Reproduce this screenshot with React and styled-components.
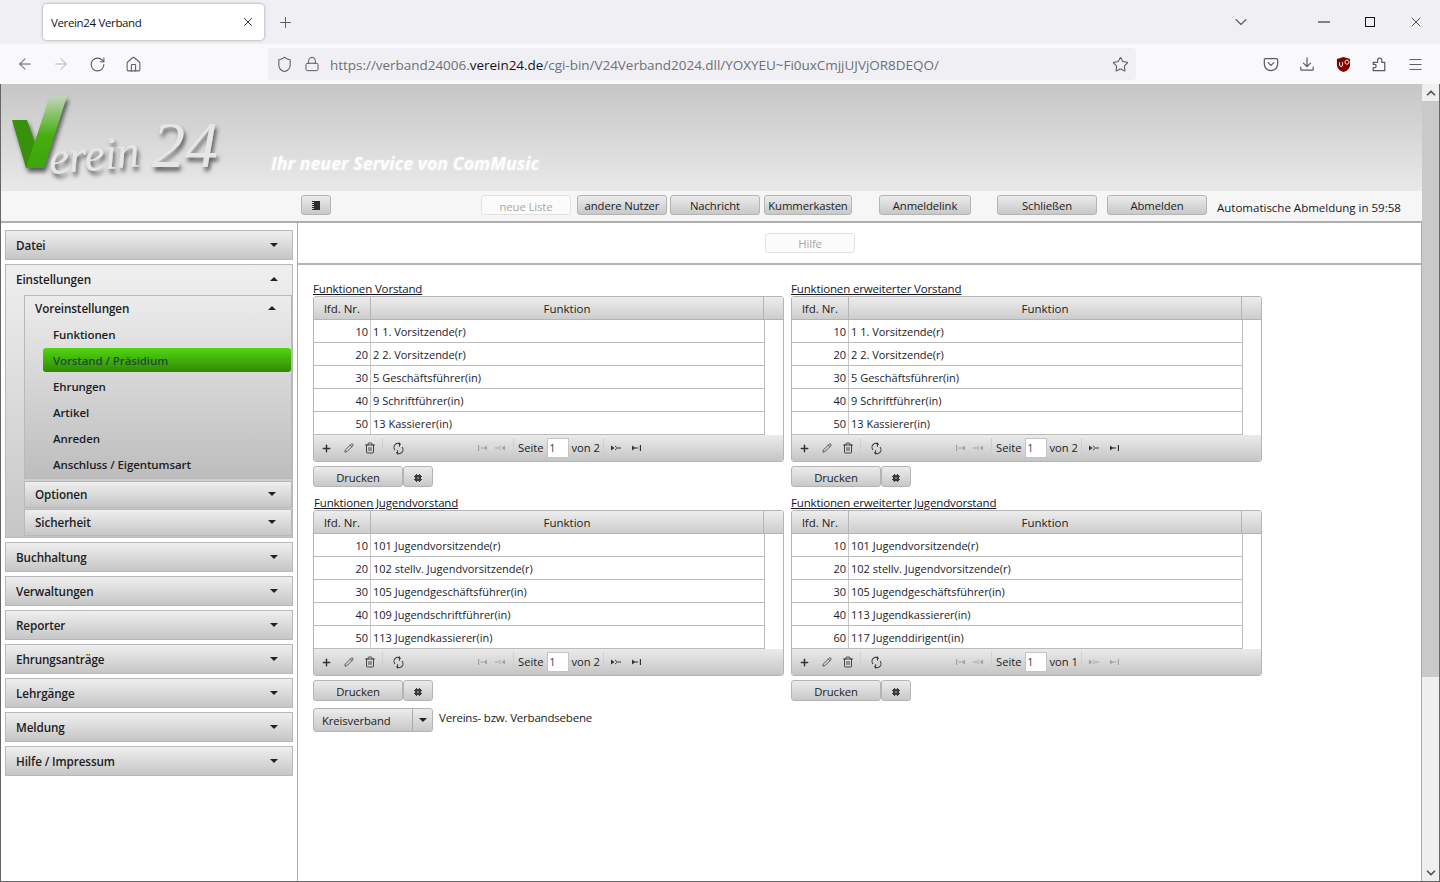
import React from "react";
import styled, { createGlobalStyle } from "styled-components";
import { ArrowLeft, ArrowRight, RotateCw, House, Shield, Lock, Star, Menu, Plus, X, ChevronDown, ChevronUp, Pencil, Trash2 } from "lucide-react";

const Global = createGlobalStyle`
  html, body { margin: 0; padding: 0; height: 100%; background: #fff; overflow: hidden; }
  #root { height: 100%; }
  * { box-sizing: border-box; }
  body { font-family: "Open Sans", "Noto Sans", sans-serif; font-size: 12px; color: #222; }
`;

const Window = styled.div`width: 1440px; height: 882px; display: flex; flex-direction: column; overflow: hidden;`;

const TabBar = styled.div`height: 44px; background: #f0f0f4; display: flex; align-items: flex-start; padding-right: 1px;`;
const Tab = styled.div`
  margin: 4px 0 0 43px; width: 221px; height: 36px; background: #fff; border-radius: 4px;
  box-shadow: 0 0 3px rgba(0,0,0,.4); display: flex; align-items: center; justify-content: space-between;
  padding: 0 9px 0 8px; font-size: 11.5px; letter-spacing: -.35px; color: #15141a;
`;
const NewTab = styled.div`width: 42px; height: 44px; display: flex; align-items: center; justify-content: center; color: #5b5b66;`;
const TabList = styled.div`margin-left: auto; margin-right: 50px; width: 20px; height: 44px; display: flex; align-items: center; justify-content: center; color: #5b5b66;`;
const WinBtn = styled.div`width: 46px; height: 44px; display: flex; align-items: center; justify-content: center; color: #15141a;`;

const NavBar = styled.div`height: 40px; background: #f9f9fb; display: flex; align-items: center; padding-left: 7px;`;
const NavSlot = styled.div`width: 36px; height: 32px; display: flex; align-items: center; justify-content: center; color: ${p => p.$off ? "#b5b5bc" : "#5b5b66"};`;
const UrlBar = styled.div`
  margin: 0 117px; width: 868px; height: 32px; border-radius: 4px; background: #f0f0f4;
  display: flex; align-items: center; color: #5b5b66;
`;
const UrlIcon = styled.div`width: ${p => p.$w}px; display: flex; justify-content: center; flex: none;`;
const UrlText = styled.div`font-size: 13.5px; padding-top: 1px; color: #6f6f78; white-space: nowrap; flex: 1; letter-spacing: -.03px; b { font-weight: 400; color: #15141a; }`;

const Page = styled.div`flex: 1; display: flex; min-height: 0; border-left: 1px solid #666; border-bottom: 1px solid #666;`;
const Main = styled.div`flex: 1; min-width: 0; display: flex; flex-direction: column;`;

const Banner = styled.div`height: 107px; flex: none; display: flex; background: linear-gradient(#c6c6c6, #e9e9e9); padding-left: 9px;`;
const LogoArt = styled.svg`width: 216px; height: 100px; margin-top: 6px; flex: none; overflow: visible;`;
const Tagline = styled.div`
  align-self: flex-end; margin: 0 0 16px 45px; font-size: 17.85px; line-height: 24px; font-weight: 700; font-style: italic;
  color: #fdfdfd; text-shadow: 0 0 3px rgba(255,255,255,.5);
`;

const Toolbar = styled.div`height: 32px; flex: none; background: #f6f6f6; border-bottom: 2px solid #aeaeae; display: flex; align-items: flex-start; padding: 4px 0 0 300px;`;
const Btn = styled.button`
  flex: none; width: ${p => p.$w}px; height: ${p => p.$h || 20}px; margin-left: ${p => p.$ml || 0}px;
  padding: ${p => p.$pt ?? 2}px 0 0;
  display: flex; align-items: center; justify-content: center;
  font: 11.3px/1 "Open Sans", sans-serif; letter-spacing: -.1px; color: ${p => p.$off ? "#a8a8a8" : "#222"};
  border: 1px solid ${p => p.$off ? "#e2e2e2" : "#b4b4b4"}; border-radius: 3px;
  background: ${p => p.$off ? "#fbfbfb" : "linear-gradient(#ececec, #c8c8c8)"};
`;
const Countdown = styled.div`margin: 5px 0 0 10px; font-size: 11.5px; line-height: 16px; color: #15151f; white-space: nowrap;`;

const Body = styled.div`flex: 1; min-height: 0; display: flex;`;
const Sidebar = styled.div`width: 297px; flex: none; border-right: 1px solid #ababab; padding: 7px 0 0 4px; display: flex; flex-direction: column; gap: 4px;`;
const panelGrad = "linear-gradient(#efefef, #c6c6c6)";
const Head = styled.div`
  height: ${p => p.$h}px; margin-bottom: ${p => p.$mb || 0}px; display: flex; align-items: center; justify-content: space-between;
  padding: 0 ${p => p.$pr || 14}px 0 ${p => p.$pl}px;
  font-size: 11.7px; letter-spacing: -.1px; font-weight: 600; color: #1c1c24; flex: none;
`;
const Panel = styled.div`width: 288px; height: 30px; flex: none; border: 1px solid #b9b9b9; background: ${panelGrad};`;
const OpenPanel = styled.div`width: 288px; height: 274px; flex: none; border: 1px solid #b9b9b9; background: ${panelGrad}; overflow: hidden;`;
const SubGroup = styled.div`margin-left: 18px; display: flex; flex-direction: column; gap: 1px; width: 268px;`;
const SubOpen = styled.div`height: 184px; margin-bottom: 1px; border: 1px solid #b9b9b9; background: linear-gradient(#ececec, #bdbdbd); flex: none;`;
const SubPanel = styled.div`height: 27px; border: 1px solid #b9b9b9; background: ${panelGrad}; flex: none;`;
const Leaves = styled.div`display: flex; flex-direction: column; gap: 2px; padding: 1px 0 0 18px;`;
const Leaf = styled.div`
  height: 24px; padding-left: 10px; display: flex; align-items: center; font-size: 11.5px; letter-spacing: -.1px; font-weight: 600;
  border-radius: 3px; color: ${p => p.$on ? "#1f4b3a" : "#1c1c24"};
  background: ${p => p.$on ? "linear-gradient(#52d610, #2f8a05)" : "none"};
`;
const Caret = styled.span`
  width: 0; height: 0; border-left: 4px solid transparent; border-right: 4px solid transparent;
  ${p => p.$up ? "border-bottom: 4px solid #222;" : "border-top: 4px solid #222;"}
`;

const Content = styled.div`flex: 1; min-width: 0; border-right: 1px solid #ababab; display: flex; flex-direction: column;`;
const HelpBar = styled.div`height: 42px; flex: none; border-bottom: 2px solid #b4b4b4; padding: 10px 0 0 467px;`;
const Tables = styled.div`display: grid; grid-template-columns: 471px 471px; column-gap: 7px; row-gap: 10px; padding: 18px 0 0 15px;`;
const Cell = styled.div`display: flex; flex-direction: column;`;
const Caption = styled.div`height: 13px; font-size: 11.5px; line-height: 12px; letter-spacing: -.15px; text-decoration: underline; color: #15151f; white-space: nowrap; padding-left: ${p => p.$in || 0}px;`;
const Grid = styled.div`height: 166px; border: 1px solid #b5b5b5; border-radius: 3px; overflow: hidden; display: flex; flex-direction: column; background: #fff;`;
const GridHead = styled.div`
  height: 23px; flex: none; display: grid; grid-template-columns: 57px 393px 1fr;
  background: linear-gradient(#ededed, #cdcdcd); border-bottom: 1px solid #b5b5b5;
`;
const HeadCell = styled.div`display: flex; align-items: center; justify-content: center; border-right: 1px solid #b5b5b5; font-size: 11.5px; color: #222; &:last-child { border-right: none; }`;
const GridRow = styled.div`
  height: 23px; flex: none; width: 451px; display: grid; grid-template-columns: 57px 394px;
  border-bottom: 1px solid #bbb;
`;
const NumCell = styled.div`display: flex; align-items: center; justify-content: flex-end; padding-right: 2px; border-right: 1px solid #c9c9c9; font-size: 11px; color: #1a1a2a;`;
const TextCell = styled.div`display: flex; align-items: center; padding-left: 2px; border-right: 1px solid #bbb; font-size: 11px; color: #1a1a2a; white-space: nowrap;`;
const Pager = styled.div`height: 26px; flex: none; display: flex; align-items: center; background: linear-gradient(#ebebeb, #c5c5c5); padding-left: 1px;`;
const PagerBtn = styled.div`width: ${p => p.$w}px; margin-left: ${p => p.$ml || 0}px; height: 20px; flex: none; display: flex; align-items: center; justify-content: center; color: ${p => p.$off ? "#a2a2a2" : "#333"};`;
const Sep = styled.div`width: 1px; height: 20px; background: #cfcfcf; flex: none; margin-left: ${p => p.$ml || 0}px;`;
const PagerLabel = styled.div`font-size: 11.2px; line-height: 14px; color: #222; margin-left: ${p => p.$ml}px; flex: none; white-space: nowrap;`;
const PageInput = styled.div`width: 22px; height: 20px; margin-left: 3px; flex: none; border: 1px solid #c4c4c4; background: #fff; font-size: 10px; line-height: 18px; padding-left: 2px; color: #333;`;
const Actions = styled.div`display: flex; margin-top: 4px;`;

const FooterRow = styled.div`display: flex; align-items: flex-start; padding: 7px 0 0 15px;`;
const Select = styled.div`
  width: 120px; height: 24px; display: grid; grid-template-columns: 1fr 19px; border: 1px solid #b4b4b4; border-radius: 3px;
  background: linear-gradient(#ececec, #c8c8c8); font-size: 11.3px; letter-spacing: -.1px; color: #222;
`;
const SelectVal = styled.div`display: flex; align-items: center; padding-left: 8px; border-right: 1px solid #aaa; padding-top: 1px;`;
const SelectArrow = styled.div`display: flex; align-items: center; justify-content: center;`;
const FieldNote = styled.div`margin-left: 6px; font-size: 11.5px; letter-spacing: -.2px; line-height: 20px; color: #222;`;

const Scroll = styled.div`width: 18px; flex: none; border-right: 1px solid #666; display: flex; flex-direction: column; background: #efefef;`;
const ScrollBtn = styled.div`height: 17px; flex: none; background: #efefef; display: flex; align-items: center; justify-content: center; color: #555;`;
const Thumb = styled.div`height: 576px; flex: none; background: #c9c9c9;`;
const Track = styled.div`flex: 1;`;

const FirstIcon = () => <svg width="10" height="8" viewBox="0 0 10 8" fill="currentColor"><rect x="0" y="1" width="1.2" height="6"/><path d="M9 1.500v5L5.500 4z"/><rect x="2.500" y="3.500" width="3" height="1"/></svg>;
const PrevIcon = () => <svg width="12" height="8" viewBox="0 0 12 8" fill="currentColor"><path d="M11 1.500v5L7.500 4zM4 4l3-2.500v1L5 4l2 1.500v1z"/><rect x="1" y="3.500" width="3" height="1"/></svg>;
const NextIcon = () => <svg width="12" height="8" viewBox="0 0 12 8" fill="currentColor"><path d="M1 1.500v5L4.500 4zM8 4L5 1.500v1L7 4 5 5.500v1z"/><rect x="8" y="3.500" width="3" height="1"/></svg>;
const LastIcon = () => <svg width="10" height="8" viewBox="0 0 10 8" fill="currentColor"><rect x="8.800" y="1" width="1.200" height="6"/><path d="M1 1.500v5L4.500 4z"/><rect x="4" y="3.500" width="3" height="1"/></svg>;
const RefreshIcon = () => <svg width="11" height="13" viewBox="0 0 12 14" fill="none" stroke="currentColor" strokeWidth="1.100"><path d="M8.500 2.800A4 4 0 0 0 2.200 8.500M3.500 11.200A4 4 0 0 0 9.800 5.500"/><path d="M7 .5v4.500M5 9v4.500" /></svg>;
const GearIcon = () => <svg width="8" height="8" viewBox="0 0 8 8"><path d="M2 0h1v1h2V0h1v1h1v1h1v1H7v2h1v1H7v1H6v1H5V7H3v1H2V7H1V6H0V5h1V3H0V2h1V1h1z" fill="#3c3c3c"/><rect x="3" y="3" width="2" height="2" fill="#777"/></svg>;
const ListIcon = () => <svg width="8" height="9" viewBox="0 0 8 9"><rect x="2" y="0" width="6" height="9" fill="#2b2b2b"/><path d="M0 .5h2M0 2.500h2M0 4.500h2M0 6.500h2M0 8.500h2" stroke="#2b2b2b" strokeWidth="1"/></svg>;
const PocketIcon = () => <svg width="16" height="16" viewBox="0 0 18 18" fill="none" stroke="#5b5b66" strokeWidth="1.400" strokeLinejoin="round" strokeLinecap="round"><path d="M2.500 3h13a1 1 0 0 1 1 1v5a7.500 7.500 0 0 1-15 0V4a1 1 0 0 1 1-1z"/><path d="M5.800 7.500L9 10.500l3.200-3"/></svg>;
const DownIcon = () => <svg width="16" height="16" viewBox="0 0 18 18" fill="none" stroke="#5b5b66" strokeWidth="1.400" strokeLinecap="round" strokeLinejoin="round"><path d="M9 2v10M5 8l4 4 4-4M2 12.500V15a1 1 0 0 0 1 1h12a1 1 0 0 0 1-1v-2.500"/></svg>;
const UbIcon = () => <svg width="15" height="17" viewBox="0 0 16 18"><path d="M8 1l7 2v6c0 4-3 7-7 8-4-1-7-4-7-8V3z" fill="#800000"/><path d="M3.800 6.500v3a1.600 1.600 0 0 0 3.200 0v-3M9.500 6.500a2.200 2.200 0 1 1 0 .01" stroke="#fff" strokeWidth="1" fill="none"/></svg>;
const PuzzleIcon = () => <svg width="16" height="17" viewBox="0 0 18 18" fill="none" stroke="#5b5b66" strokeWidth="1.400" strokeLinejoin="round"><path d="M2.500 6.500h5V4a2.300 2.300 0 0 1 4.600 0v2.500h3.400V16H2.500v-3.500h1.500a1.800 1.800 0 0 0 0-3.600H2.500z"/></svg>;
const MinIcon = () => <svg width="12" height="2" viewBox="0 0 12 2"><rect width="12" height="1" y=".5" fill="#15141a"/></svg>;
const MaxIcon = () => <svg width="10" height="10" viewBox="0 0 10 10"><rect x=".5" y=".5" width="9" height="9" fill="none" stroke="#15141a"/></svg>;

const Logo = () => (
  <LogoArt viewBox="0 0 216 100">
    <defs>
      <linearGradient id="vr" x1="0" y1="1" x2="0" y2="0">
        <stop offset="0" stopColor="#3da50b" />
        <stop offset=".45" stopColor="#46ae10" />
        <stop offset="1" stopColor="#c3d4bd" />
      </linearGradient>
      <filter id="sh" x="-20%" y="-20%" width="140%" height="150%">
        <feDropShadow dx="2" dy="4" stdDeviation="2" floodColor="#444" floodOpacity=".85" />
      </filter>
    </defs>
    <g filter="url(#sh)">
      <path d="M2 30h15l17 48H16z" fill="#389008" />
      <path d="M16 78h18L57 6H40z" fill="url(#vr)" />
    </g>
    <g filter="url(#sh)" fill="#e6e6e6" fontFamily="'Liberation Serif', serif" fontStyle="italic">
      <text x="0" y="0" fontSize="46" letterSpacing="-.5" transform="translate(40 84) rotate(-5)">erein</text>
      <text x="142" y="77" fontSize="66" letterSpacing="0">24</text>
    </g>
  </LogoArt>
);

const TABLES = [
  { title: "Funktionen Vorstand", rows: [[10,"1 1. Vorsitzende(r)"],[20,"2 2. Vorsitzende(r)"],[30,"5 Geschäftsführer(in)"],[40,"9 Schriftführer(in)"],[50,"13 Kassierer(in)"]], pages: 2 },
  { title: "Funktionen erweiterter Vorstand", rows: [[10,"1 1. Vorsitzende(r)"],[20,"2 2. Vorsitzende(r)"],[30,"5 Geschäftsführer(in)"],[40,"9 Schriftführer(in)"],[50,"13 Kassierer(in)"]], pages: 2 },
  { title: "Funktionen Jugendvorstand", indent: 1, rows: [[10,"101 Jugendvorsitzende(r)"],[20,"102 stellv. Jugendvorsitzende(r)"],[30,"105 Jugendgeschäftsführer(in)"],[40,"109 Jugendschriftführer(in)"],[50,"113 Jugendkassierer(in)"]], pages: 2 },
  { title: "Funktionen erweiterter Jugendvorstand", rows: [[10,"101 Jugendvorsitzende(r)"],[20,"102 stellv. Jugendvorsitzende(r)"],[30,"105 Jugendgeschäftsführer(in)"],[40,"113 Jugendkassierer(in)"],[60,"117 Jugenddirigent(in)"]], pages: 1 },
];

const DataTable = ({ t }) => (
  <Cell>
    <Caption $in={t.indent}>{t.title}</Caption>
    <Grid>
      <GridHead>
        <HeadCell>lfd. Nr.</HeadCell>
        <HeadCell>Funktion</HeadCell>
        <HeadCell />
      </GridHead>
      {t.rows.map(r => (
        <GridRow key={r[0]}>
          <NumCell>{r[0]}</NumCell>
          <TextCell>{r[1]}</TextCell>
        </GridRow>
      ))}
      <Pager>
        <PagerBtn $w={22}><Plus size={11} strokeWidth={3.2} /></PagerBtn>
        <PagerBtn $w={20} $ml={2}><Pencil size={10} strokeWidth={1.800} /></PagerBtn>
        <PagerBtn $w={20} $ml={1}><Trash2 size={12} strokeWidth={1.800} /></PagerBtn>
        <Sep $ml={2} />
        <PagerBtn $w={20} $ml={5}><RefreshIcon /></PagerBtn>
        <PagerBtn $w={20} $ml={65} $off><FirstIcon /></PagerBtn>
        <PagerBtn $w={14} $off><PrevIcon /></PagerBtn>
        <Sep $ml={6} />
        <PagerLabel $ml={4}>Seite</PagerLabel>
        <PageInput>1</PageInput>
        <PagerLabel $ml={3}>von {t.pages}</PagerLabel>
        <Sep $ml={3} />
        <PagerBtn $w={20} $ml={2} $off={t.pages === 1}><NextIcon /></PagerBtn>
        <PagerBtn $w={20} $off={t.pages === 1}><LastIcon /></PagerBtn>
      </Pager>
    </Grid>
    <Actions>
      <Btn $w={90} $h={21}>Drucken</Btn>
      <Btn $w={30} $h={21}><GearIcon /></Btn>
    </Actions>
  </Cell>
);

const TOP = ["Buchhaltung", "Verwaltungen", "Reporter", "Ehrungsanträge", "Lehrgänge", "Meldung", "Hilfe / Impressum"];
const LEAVES = ["Funktionen", "Vorstand / Präsidium", "Ehrungen", "Artikel", "Anreden", "Anschluss / Eigentumsart"];

export default function App() {
  return (
    <Window>
      <Global />
      <TabBar>
        <Tab>Verein24 Verband<X size={14} strokeWidth={1.500} color="#15141a" /></Tab>
        <NewTab><Plus size={17} strokeWidth={1.400} /></NewTab>
        <TabList><ChevronDown size={20} strokeWidth={1.300} /></TabList>
        <WinBtn><MinIcon /></WinBtn>
        <WinBtn><MaxIcon /></WinBtn>
        <WinBtn><X size={16} strokeWidth={1.100} /></WinBtn>
      </TabBar>
      <NavBar>
        <NavSlot><ArrowLeft size={18} strokeWidth={1.400} /></NavSlot>
        <NavSlot $off><ArrowRight size={18} strokeWidth={1.400} /></NavSlot>
        <NavSlot><RotateCw size={17} strokeWidth={1.500} /></NavSlot>
        <NavSlot><House size={17} strokeWidth={1.500} /></NavSlot>
        <UrlBar>
          <UrlIcon $w={32}><Shield size={17} strokeWidth={1.500} /></UrlIcon>
          <UrlIcon $w={24}><Lock size={16} strokeWidth={1.500} /></UrlIcon>
          <UrlIcon $w={6} />
          <UrlText>https://verband24006.<b>verein24.de</b>/cgi-bin/V24Verband2024.dll/YOXYEU~Fi0uxCmjjUJVjOR8DEQO/</UrlText>
          <UrlIcon $w={32}><Star size={17} strokeWidth={1.500} /></UrlIcon>
        </UrlBar>
        <NavSlot><PocketIcon /></NavSlot>
        <NavSlot><DownIcon /></NavSlot>
        <NavSlot><UbIcon /></NavSlot>
        <NavSlot><PuzzleIcon /></NavSlot>
        <NavSlot><Menu size={17} strokeWidth={1.400} /></NavSlot>
      </NavBar>
      <Page>
        <Main>
          <Banner>
            <Logo />
            <Tagline>Ihr neuer Service von ComMusic</Tagline>
          </Banner>
          <Toolbar>
            <Btn $w={30} $pt={0}><ListIcon /></Btn>
            <Btn $w={90} $ml={150} $off $pt={4}>neue Liste</Btn>
            <Btn $w={90} $ml={6}>andere Nutzer</Btn>
            <Btn $w={90} $ml={3}>Nachricht</Btn>
            <Btn $w={88} $ml={4}>Kummerkasten</Btn>
            <Btn $w={92} $ml={27}>Anmeldelink</Btn>
            <Btn $w={100} $ml={26}>Schließen</Btn>
            <Btn $w={100} $ml={10}>Abmelden</Btn>
            <Countdown>Automatische Abmeldung in 59:58</Countdown>
          </Toolbar>
          <Body>
            <Sidebar>
              <Panel><Head $h={28} $pl={10}>Datei<Caret /></Head></Panel>
              <OpenPanel>
                <Head $h={28} $mb={2} $pl={10}>Einstellungen<Caret $up /></Head>
                <SubGroup>
                  <SubOpen>
                    <Head $h={24} $mb={1} $pl={10} $pr={15}>Voreinstellungen<Caret $up /></Head>
                    <Leaves>
                      {LEAVES.map((l, i) => <Leaf key={l} $on={i === 1}>{l}</Leaf>)}
                    </Leaves>
                  </SubOpen>
                  <SubPanel><Head $h={23} $pl={10} $pr={15}>Optionen<Caret /></Head></SubPanel>
                  <SubPanel><Head $h={23} $pl={10} $pr={15}>Sicherheit<Caret /></Head></SubPanel>
                </SubGroup>
              </OpenPanel>
              {TOP.map(l => <Panel key={l}><Head $h={28} $pl={10}>{l}<Caret /></Head></Panel>)}
            </Sidebar>
            <Content>
              <HelpBar><Btn $w={90} $off $pt={1}>Hilfe</Btn></HelpBar>
              <Tables>
                {TABLES.map(t => <DataTable key={t.title} t={t} />)}
              </Tables>
              <FooterRow>
                <Select>
                  <SelectVal>Kreisverband</SelectVal>
                  <SelectArrow><Caret /></SelectArrow>
                </Select>
                <FieldNote>Vereins- bzw. Verbandsebene</FieldNote>
              </FooterRow>
            </Content>
          </Body>
        </Main>
        <Scroll>
          <ScrollBtn><ChevronUp size={14} strokeWidth={3} /></ScrollBtn>
          <Thumb />
          <Track />
          <ScrollBtn><ChevronDown size={14} strokeWidth={3} /></ScrollBtn>
        </Scroll>
      </Page>
    </Window>
  );
}
